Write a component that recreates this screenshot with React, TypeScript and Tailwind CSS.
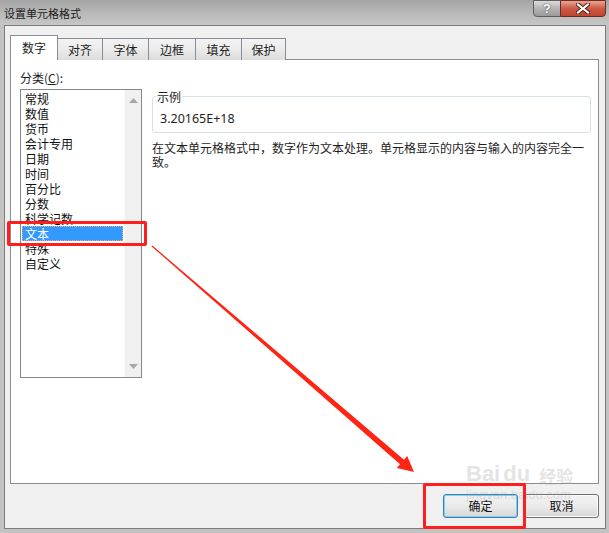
import React from "react";

const CJK = '"Noto Sans CJK SC", "Noto Sans", sans-serif';

function Tab({ label, w, selected }: { label: string; w: number; selected?: boolean }) {
  if (selected) {
    return (
      <div
        className="relative z-10 h-[25px] flex items-center justify-center border border-b-0 border-[#898c95] bg-white text-[12px] text-[#1e1e1e] -mr-px"
        style={{ width: w }}
      >
        <span className="-mt-[1px]">{label}</span>
      </div>
    );
  }
  return (
    <div
      className="h-[22px] flex items-center justify-center border border-b-0 border-[#898c95] bg-gradient-to-b from-[#f3f3f3] via-[#ebebeb] to-[#dcdcdc] text-[12px] text-[#1e1e1e] -mr-px"
      style={{ width: w }}
    >
      {label}
    </div>
  );
}

export default function App() {
  const items = ["常规", "数值", "货币", "会计专用", "日期", "时间", "百分比", "分数", "科学记数", "文本", "特殊", "自定义"];
  const tabs: [string, number][] = [
    ["对齐", 46],
    ["字体", 47],
    ["边框", 48],
    ["填充", 47],
    ["保护", 45],
  ];
  return (
    <div
      className="relative w-[609px] h-[533px] overflow-hidden bg-[#c3c3c3] flex flex-col"
      style={{ fontFamily: CJK }}
    >
      {/* Title bar */}
      <div className="h-[25px] shrink-0 flex items-start justify-between bg-gradient-to-b from-[#a4a4a4] via-[#b8b8b8] to-[#c6c6c6]">
        <div className="pl-[4px] pt-[5px] text-[11px] leading-[16px] text-[#1b1b1b]">设置单元格格式</div>
        <div className="flex mr-[3px]">
          <div className="w-[28px] h-[17px] rounded-bl-[4px] border border-[#5e5e5e] bg-gradient-to-b from-[#dcdcdc] via-[#b4b4b4] to-[#9c9c9c] flex items-center justify-center text-[12px] font-bold text-white leading-none" style={{ fontFamily: '"Liberation Sans", sans-serif', textShadow: "0 0 2px #333" }}>
            ?
          </div>
          <div className="w-[46px] h-[17px] -ml-px rounded-br-[4px] border border-[#6b2a22] bg-gradient-to-b from-[#e9a593] via-[#c95a45] to-[#c0452f] flex items-center justify-center">
            <svg width="14" height="11" viewBox="0 0 14 11">
              <path d="M2 1.5 L12 9.5 M12 1.5 L2 9.5" stroke="#4a1a12" strokeWidth="4" strokeLinecap="square" />
              <path d="M2 1.5 L12 9.5 M12 1.5 L2 9.5" stroke="#ffffff" strokeWidth="2.2" strokeLinecap="square" />
            </svg>
          </div>
        </div>
      </div>

      {/* Dialog body */}
      <div className="ml-[4px] mr-[3px] h-[504px] border border-[#7c7c7c] bg-[#f0f0f0] flex flex-col pt-[9px]">
        {/* tab row */}
        <div className="relative z-10 ml-[5px] h-[25px] -mb-px flex items-end">
          <Tab label="数字" w={48} selected />
          {tabs.map(([l, w]) => (
            <Tab key={l} label={l} w={w} />
          ))}
        </div>

        {/* panel */}
        <div className="ml-[5px] mr-[6px] h-[425px] border border-[#898c95] bg-white flex pl-[9px] pr-[7px] pt-[10px]">
          {/* left column */}
          <div className="w-[122px] shrink-0 flex flex-col">
            <div className="text-[12px] leading-[16px] text-[#1e1e1e]">
              分类(<span className="underline">C</span>):
            </div>
            <div className="mt-[3px] h-[289px] border border-[#828790] flex">
              <div className="flex-1 pt-[1px] pl-[1px] pr-[1px] flex flex-col">
                {items.map((it) =>
                  it === "文本" ? (
                    <div
                      key={it}
                      className="h-[15px] leading-[13px] text-[12px] pl-[2px] bg-[#3399ff] text-white border border-dotted border-[#e8b070]"
                    >
                      {it}
                    </div>
                  ) : (
                    <div key={it} className="h-[15px] leading-[15px] text-[12px] pl-[3px] text-[#111]">
                      {it}
                    </div>
                  )
                )}
              </div>
              <div className="w-[17px] shrink-0 bg-[#f0f0f0] border-l border-[#f7f7f7] flex flex-col items-center justify-between pt-[8px] pb-[8px]">
                <svg width="9" height="5" viewBox="0 0 9 5">
                  <path d="M4.5 0 L9 5 L0 5 Z" fill="#a8a8a8" />
                </svg>
                <svg width="9" height="5" viewBox="0 0 9 5">
                  <path d="M0 0 L9 0 L4.5 5 Z" fill="#a8a8a8" />
                </svg>
              </div>
            </div>
          </div>

          {/* right column */}
          <div className="flex-1 ml-[10px] pt-[26px]">
            <div className="relative h-[37px] border border-[#d5dfe5] rounded-[3px] pl-[7px] pt-[14px]">
              <span className="absolute -top-[7px] left-[3px] px-[1px] bg-white text-[12px] leading-[14px] text-[#1e1e1e]">
                示例
              </span>
              <div className="text-[12.5px] leading-[16px] text-[#1e1e1e]" style={{ fontFamily: '"Noto Sans", sans-serif' }}>
                3.20165E+18
              </div>
            </div>
            <div className="mt-[8px] text-[12px] leading-[14px] text-[#1e1e1e]">
              在文本单元格格式中，数字作为文本处理。单元格显示的内容与输入的内容完全一致。
            </div>
          </div>
        </div>

        {/* buttons */}
        <div className="mt-[10px] pr-[6px] flex justify-end gap-[6px]">
          <div className="w-[75px] h-[24px] rounded-[3px] border border-[#3c7fb1] bg-gradient-to-b from-[#f2f2f2] via-[#ebebeb] to-[#d6d6d6] flex items-center justify-center text-[12px] text-[#111] shadow-[inset_0_0_0_1px_#7fd0f5]">
            确定
          </div>
          <div className="w-[75px] h-[24px] rounded-[3px] border border-[#707070] bg-gradient-to-b from-[#f2f2f2] via-[#ebebeb] to-[#d6d6d6] flex items-center justify-center text-[12px] text-[#111] shadow-[inset_0_0_0_1px_#fbfbfb]">
            取消
          </div>
        </div>
      </div>

      {/* watermark */}
      <div className="absolute left-[466px] top-[463px] pointer-events-none text-[#a8a8a8] opacity-30" style={{ fontFamily: '"Liberation Sans", sans-serif' }}>
        <div className="flex items-end gap-[3px]">
          <span className="text-[22px] font-bold leading-[22px]">Bai</span>
          <span className="text-[22px] font-bold leading-[22px]">du</span>
          <span className="text-[17px] font-bold leading-[18px] ml-[6px]" style={{ fontFamily: CJK }}>经验</span>
        </div>
        <div className="text-[13px] leading-[15px] mt-[2px]">jingyan.baidu.com</div>
      </div>

      {/* red annotations */}
      <div className="absolute left-[7px] top-[221px] w-[140px] h-[25px] border-[3px] border-[#ff1e1e] rounded-[2px] pointer-events-none" />
      <div className="absolute left-[423px] top-[483px] w-[103px] h-[46px] border-[3px] border-[#ff1e1e] rounded-[2px] pointer-events-none" />
      <svg className="absolute left-0 top-0 pointer-events-none" width="609" height="533" viewBox="0 0 609 533">
        <polygon
          points="152.4,245.6 404,459.7 407.2,455.9 414,472 396.8,468.1 400,464.3 151.6,246.4"
          fill="#ff2414"
        />
      </svg>
    </div>
  );
}
